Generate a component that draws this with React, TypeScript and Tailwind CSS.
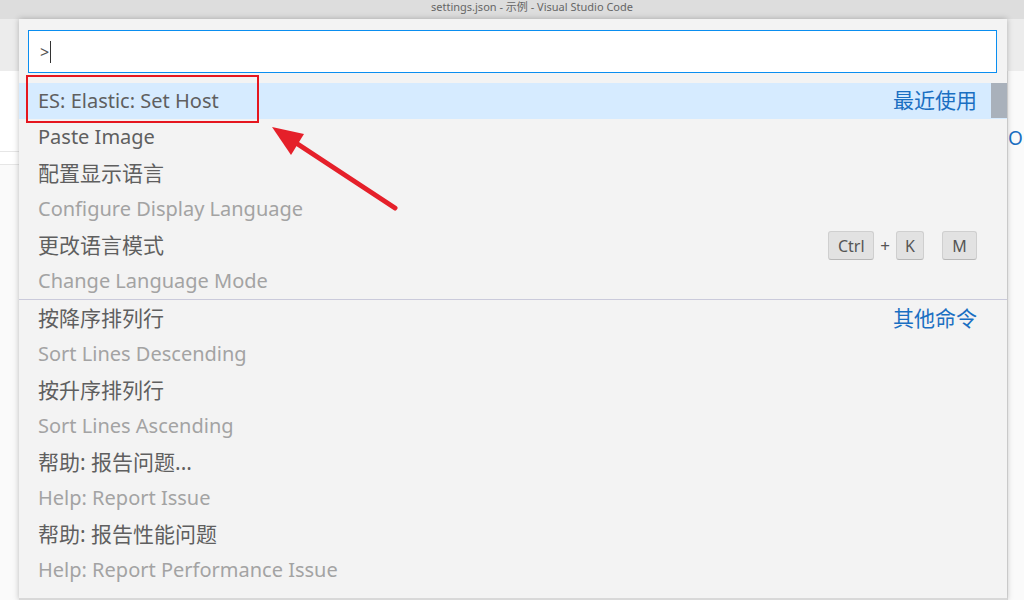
import React from 'react';

// Пункты палитры команд
interface Item {
  label: string;
  detail?: string;
  right?: 'recent' | 'other' | 'keys';
  selected?: boolean;
  divider?: boolean;
  latin?: boolean;
}

const ITEMS: Item[] = [
  { label: 'ES: Elastic: Set Host', right: 'recent', selected: true, latin: true },
  { label: 'Paste Image', latin: true },
  { label: '配置显示语言', detail: 'Configure Display Language' },
  { label: '更改语言模式', detail: 'Change Language Mode', right: 'keys' },
  { label: '按降序排列行', detail: 'Sort Lines Descending', right: 'other', divider: true },
  { label: '按升序排列行', detail: 'Sort Lines Ascending' },
  { label: '帮助: 报告问题...', detail: 'Help: Report Issue' },
  { label: '帮助: 报告性能问题', detail: 'Help: Report Performance Issue' },
];

const FONT = "font-['Noto_Sans','Noto_Sans_CJK_SC',sans-serif]";

const Key = ({ children, w }: { children: React.ReactNode; w: string }) => (
  <span
    className={`${w} h-[29px] flex items-center justify-center rounded-[3px] bg-[#e2e2e2] border border-[#cfcfcf] border-b-[#b8b8b8] text-[16px] text-[#555]`}
  >
    {children}
  </span>
);

const Row = ({ item }: { item: Item }) => {
  const rightLabel =
    item.right === 'recent' ? '最近使用' : item.right === 'other' ? '其他命令' : null;
  return (
    <div
      className={`flex flex-col pl-[19px] pr-[30px] ${item.divider ? 'border-t border-[#cacadb]' : ''} ${
        item.selected ? 'bg-[#d6ebff]' : ''
      }`}
    >
      <div className={`flex items-center ${item.detail ? 'h-[37px]' : 'h-[36px]'}`}>
        <span
          className={`${item.latin ? 'text-[20px]' : 'text-[21px]'} text-[#5f5f5f] whitespace-nowrap`}
        >
          {item.label}
        </span>
        <span className="flex-1" />
        {rightLabel && <span className="text-[21px] text-[#1a6fc2]">{rightLabel}</span>}
        {item.right === 'keys' && (
          <div className="flex items-center">
            <Key w="w-[46px]">Ctrl</Key>
            <span className="mx-[6px] text-[17px] text-[#555]">+</span>
            <Key w="w-[28px]">K</Key>
            <span className="w-[18px]" />
            <Key w="w-[35px]">M</Key>
          </div>
        )}
      </div>
      {item.detail && (
        <div className="flex items-center h-[34px] mb-[1px]">
          <span className="text-[20px] text-[#a3a3a3] whitespace-nowrap">{item.detail}</span>
        </div>
      )}
    </div>
  );
};

export default function App() {
  return (
    <div className={`relative w-[1024px] h-[600px] overflow-hidden bg-white flex flex-col ${FONT}`}>
      {/* Заголовок окна */}
      <div className="h-[19px] bg-[#dddddd] flex justify-center shrink-0">
        <span className="text-[11px] leading-[13px] text-[#666] whitespace-nowrap pl-[40px]">
          settings.json - 示例 - Visual Studio Code
        </span>
      </div>

      <div className="flex flex-1 min-h-0">
        {/* Левый край редактора */}
        <div className="w-[19px] flex flex-col shrink-0">
          <div className="h-[52px] bg-[#ececec]" />
          <div className="h-[81px] bg-white border-b border-[#e6e6e6]" />
          <div className="h-[13px] bg-white border-b border-[#e6e6e6]" />
          <div className="flex-1 bg-[#fafafa]" />
        </div>

        {/* Палитра команд */}
        <div className="w-[988px] bg-[#f3f3f3] shadow-[0_0_6px_rgba(0,0,0,0.25)] flex flex-col relative z-10 border-b-2 border-[#d8d8d8]">
          <div className="pt-[11px] pl-[9px] pr-[10px]">
            <div className="h-[43px] bg-white border border-[#0a8ef0] flex items-center pl-[11px]">
              <span className="text-[16px] text-[#555]">&gt;</span>
              <span className="w-px h-[22px] bg-[#333] ml-[1px]" />
            </div>
          </div>
          <div className="relative mt-[10px] flex-1">
            {ITEMS.map((item) => (
              <Row key={item.label} item={item} />
            ))}
            {/* Полоса прокрутки */}
            <div className="absolute right-0 top-0 w-[16px] h-[35px] bg-[#a9b1bb]" />
          </div>
        </div>

        {/* Правый край редактора */}
        <div className="flex-1 flex flex-col">
          <div className="h-[52px] bg-[#ececec]" />
          <div className="flex-1 bg-[#fafafa] border-l border-[#e2e2e2] pt-[56px]">
            <span className="text-[19px] text-[#1a6fc2] leading-none">O</span>
          </div>
        </div>
      </div>

      {/* Красная рамка вокруг выбранного пункта */}
      <div className="absolute left-[26px] top-[75px] w-[233px] h-[48px] border-2 border-[#e5161f] z-20" />

      {/* Красная стрелка */}
      <svg className="absolute left-0 top-0 z-20" width="1024" height="600" viewBox="0 0 1024 600">
        <line x1="395" y1="208" x2="290" y2="139" stroke="#e5202a" strokeWidth="5" strokeLinecap="round" />
        <polygon points="272,127 304,134 291,155" fill="#e5202a" />
      </svg>
    </div>
  );
}
